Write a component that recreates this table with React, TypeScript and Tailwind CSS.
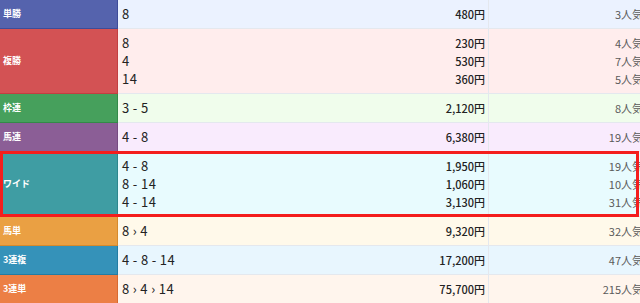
import React from "react";

type Row = {
  label: string;
  labelBg: string;
  rowBg: string;
  lines: { combo: string; pay: string; pop: string }[];
  highlight?: boolean;
};

const rows: Row[] = [
  {
    label: "単勝",
    labelBg: "bg-[#5563ad] border-[#3e4c98]",
    rowBg: "bg-[#ebf2ff]",
    lines: [{ combo: "8", pay: "480円", pop: "3人気" }],
  },
  {
    label: "複勝",
    labelBg: "bg-[#d35254] border-[#c23e41]",
    rowBg: "bg-[#ffeded]",
    lines: [
      { combo: "8", pay: "230円", pop: "4人気" },
      { combo: "4", pay: "530円", pop: "7人気" },
      { combo: "14", pay: "360円", pop: "5人気" },
    ],
  },
  {
    label: "枠連",
    labelBg: "bg-[#46a05c] border-[#338a48]",
    rowBg: "bg-[#f0fdec]",
    lines: [{ combo: "3 - 5", pay: "2,120円", pop: "8人気" }],
  },
  {
    label: "馬連",
    labelBg: "bg-[#8b5e96] border-[#764b82]",
    rowBg: "bg-[#f9ebfd]",
    lines: [{ combo: "4 - 8", pay: "6,380円", pop: "19人気" }],
  },
  {
    label: "ワイド",
    labelBg: "bg-[#3f9da3] border-[#2d878d]",
    rowBg: "bg-[#e8fbfe]",
    highlight: true,
    lines: [
      { combo: "4 - 8", pay: "1,950円", pop: "19人気" },
      { combo: "8 - 14", pay: "1,060円", pop: "10人気" },
      { combo: "4 - 14", pay: "3,130円", pop: "31人気" },
    ],
  },
  {
    label: "馬単",
    labelBg: "bg-[#eaa043] border-[#d68a2c]",
    rowBg: "bg-[#fff9ea]",
    lines: [{ combo: "8 › 4", pay: "9,320円", pop: "32人気" }],
  },
  {
    label: "3連複",
    labelBg: "bg-[#3592b9] border-[#227ca3]",
    rowBg: "bg-[#e8f6fe]",
    lines: [{ combo: "4 - 8 - 14", pay: "17,200円", pop: "47人気" }],
  },
  {
    label: "3連単",
    labelBg: "bg-[#ec7f45] border-[#d86a30]",
    rowBg: "bg-[#fff5ed]",
    lines: [{ combo: "8 › 4 › 14", pay: "75,700円", pop: "215人気" }],
  },
];

function PayoutRow({ row }: { row: Row }) {
  const tall = row.lines.length > 1;
  return (
    <div className={`relative grid grid-cols-[118px_371px_160px] ${tall ? "h-[65px]" : "h-[29px]"}`}>
      <div className={`flex items-center border-r border-b pl-[3px] text-[9px] font-bold text-white ${row.labelBg}`}>
        {row.label}
      </div>
      <div className={`flex flex-col justify-center border-r border-b border-[#e4e8ee] pl-[4px] pr-[3px] ${row.rowBg}`}>
        {row.lines.map((l, i) => (
          <div key={i} className="flex h-[18px] items-center justify-between">
            <span className="text-[13px] tracking-[0.5px] text-[#222]">{l.combo.replace(/ /g, "\u2009")}</span>
            <span className="text-[11px] font-medium text-[#222]">{l.pay}</span>
          </div>
        ))}
      </div>
      <div className={`flex flex-col justify-center border-b border-[#e4e8ee] pr-[6px] ${row.rowBg}`}>
        {row.lines.map((l, i) => (
          <div key={i} className="flex h-[18px] items-center justify-end text-[11px] text-[#5a5a5a]">
            {l.pop}
          </div>
        ))}
      </div>
      {row.highlight && (
        <div className="pointer-events-none absolute -top-[1px] left-0 h-[66px] w-[639px] border-[3px] border-[#f41d1d]" />
      )}
    </div>
  );
}

export default function App() {
  return (
    <div className="h-[303px] w-[640px] overflow-hidden bg-white font-['Noto_Sans_CJK_JP','Noto_Sans',sans-serif]">
      <div className="w-[649px]">
        {rows.map((r) => (
          <PayoutRow key={r.label} row={r} />
        ))}
      </div>
    </div>
  );
}
